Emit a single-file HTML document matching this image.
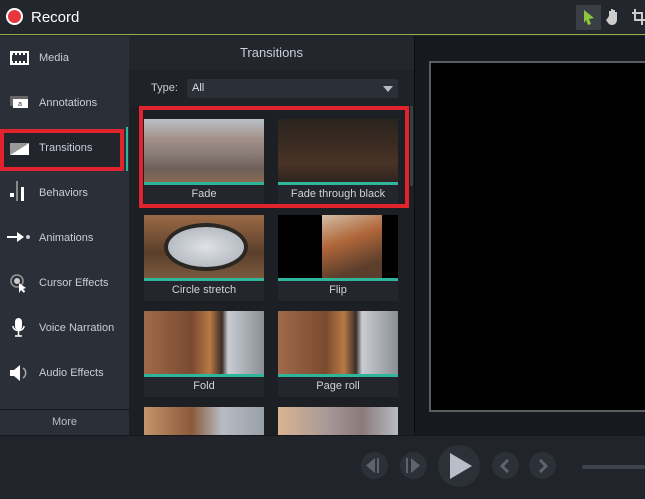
<!DOCTYPE html>
<html><head><style>
*{margin:0;padding:0;box-sizing:border-box}
body{width:645px;height:499px;overflow:hidden;background:#1f2328;font-family:"Liberation Sans",sans-serif;position:relative;color:#c9ced6}
.abs{position:absolute}
.top{left:0;top:0;width:645px;height:35px;background:#23272d;border-bottom:1px solid #8fb04a}
.side{left:0;top:36px;width:129px;height:399px;background:#2b3038}
.item{position:absolute;left:39px;font-size:11px;color:#c9ced6}
.ico{position:absolute;left:10px}
.panel{left:129px;top:36px;width:285px;height:399px;background:#1c1f24}
.thumb{position:absolute;width:120px;height:86px;background:#23272d}
.img{position:absolute;left:0;top:0;width:120px;height:63px}
.teal{position:absolute;left:0;top:63px;width:120px;height:3px;background:#2fb59b}
.lbl{position:absolute;left:0;top:69px;width:120px;text-align:center;font-size:11px;color:#d0d4da}
</style></head><body>
<div class="abs top"></div>
<div class="abs" style="left:6px;top:8px;width:17px;height:17px;border-radius:50%;background:#e8363d;border:2px solid #fff"></div>
<div class="abs" style="left:31px;top:9px;font-size:15px;color:#fff">Record</div>
<div class="abs" style="left:576px;top:5px;width:25px;height:25px;background:#3a3f46"></div>
<svg class="abs" style="left:583px;top:9px" width="12" height="17"><path d="M1 1 L11 9 L6 10 L8 15 L5 16 L3 11 L1 14Z" fill="#8cc63f"/></svg>
<svg class="abs" style="left:606px;top:8px" width="16" height="18"><path d="M3 8 V3 h2 v5 V1 h2 v7 V2 h2 v6 V4 h2 v7 c0 4-2 6-5 6 c-3 0-4-2-6-5 l1-1z" fill="#ccc"/></svg>
<svg class="abs" style="left:632px;top:9px" width="13" height="16"><path d="M3 0 V11 H13 M0 4 H10 V16" stroke="#ccc" stroke-width="2" fill="none"/></svg>
<div class="abs side"></div>
<div class="abs" style="left:0;top:36px;width:129px;height:399px">
 <svg class="ico" style="top:15px" width="19" height="14"><rect x="1" y="1" width="17" height="12" fill="none" stroke="#fff" stroke-width="2"/><path d="M1 3h17M1 11h17" stroke="#fff" stroke-dasharray="2 2" stroke-width="2"/></svg>
 <div class="item" style="top:16px">Media</div>
 <svg class="ico" style="top:60px" width="20" height="14"><rect x="0" y="0" width="18" height="10" fill="#666"/><rect x="3" y="3" width="15" height="9" fill="#fff"/><text x="8" y="10" font-size="7" fill="#333">a</text></svg>
 <div class="item" style="top:61px">Annotations</div>
 <div class="abs" style="left:0;top:93px;width:124px;height:42px;border:4px solid #e0232c;background:#22262c"></div>
 <div class="abs" style="left:126px;top:91px;width:2px;height:44px;background:#2fb59b"></div>
 <svg class="ico" style="top:107px" width="19" height="12"><path d="M0 12 L19 0 V12Z" fill="#fff"/><path d="M0 0 H19 L0 12Z" fill="#999"/></svg>
 <div class="item" style="top:106px">Transitions</div>
 <svg class="ico" style="top:145px" width="16" height="22"><rect x="0" y="12" width="4" height="4" fill="#fff"/><rect x="6" y="0" width="2" height="20" fill="#888"/><rect x="11" y="6" width="3" height="14" fill="#fff"/></svg>
 <div class="item" style="top:151px">Behaviors</div>
 <svg class="ico" style="top:196px;left:7px" width="24" height="10"><path d="M0 5H14" stroke="#fff" stroke-width="2"/><path d="M10 0 L17 5 L10 10Z" fill="#fff"/><circle cx="21" cy="5" r="2" fill="#ccc"/></svg>
 <div class="item" style="top:196px">Animations</div>
 <svg class="ico" style="top:238px" width="18" height="20"><circle cx="7" cy="7" r="6" fill="none" stroke="#999" stroke-width="1.5"/><circle cx="7" cy="7" r="3" fill="#ccc"/><path d="M9 9 L9 19 L11 16 L14 19 L15 17 L13 15 L16 14Z" fill="#fff"/></svg>
 <div class="item" style="top:241px">Cursor Effects</div>
 <svg class="ico" style="top:282px;left:12px" width="14" height="19"><rect x="3" y="0" width="7" height="12" rx="3.5" fill="#fff"/><path d="M1 8 c0 6 11 6 11 0 M6.5 13 v5 M3 18h7" stroke="#fff" stroke-width="1.5" fill="none"/></svg>
 <div class="item" style="top:286px">Voice Narration</div>
 <svg class="ico" style="top:328px" width="20" height="18"><path d="M0 6 h4 l6-5 v16 l-6-5 h-4z" fill="#fff"/><path d="M13 4 a6 6 0 0 1 0 10" stroke="#aaa" stroke-width="1.5" fill="none"/></svg>
 <div class="item" style="top:331px">Audio Effects</div>
 <div class="abs" style="left:0;top:373px;width:129px;height:1px;background:#16191d"></div>
 <div class="abs" style="left:0;top:380px;width:129px;text-align:center;font-size:11px;color:#b8bdc4">More</div>
</div>
<div class="abs panel"></div>
<div class="abs" style="left:129px;top:36px;width:285px;height:34px;background:#23272d"></div>
<div class="abs" style="left:129px;top:45px;width:285px;text-align:center;font-size:13px;color:#c9ced6">Transitions</div>
<div class="abs" style="left:129px;top:70px;width:285px;height:36px;background:#1f2328"></div>
<div class="abs" style="left:151px;top:82px;font-size:11px">Type:</div>
<div class="abs" style="left:187px;top:79px;width:211px;height:19px;background:#2b3038;border-radius:2px"></div>
<div class="abs" style="left:192px;top:82px;font-size:11px;color:#dde">All</div>
<svg class="abs" style="left:383px;top:86px" width="10" height="6"><path d="M0 0H10L5 6Z" fill="#bbb"/></svg>
<div class="abs" style="left:410px;top:106px;width:3px;height:80px;background:#3a3f46"></div>

<div class="thumb" style="left:144px;top:119px"><div class="img" style="background:linear-gradient(180deg,#b9c0c8 0%,#a5928a 30%,#8a7c78 55%,#6d5f57 80%,#8a6a52 100%)"></div><div class="teal"></div><div class="lbl">Fade</div></div>
<div class="thumb" style="left:278px;top:119px"><div class="img" style="background:linear-gradient(180deg,#2a241f 0%,#3a2b21 40%,#4a3326 70%,#2e2520 100%)"></div><div class="teal"></div><div class="lbl">Fade through black</div></div>
<div class="thumb" style="left:144px;top:215px"><div class="img" style="background:linear-gradient(180deg,#9a6a45,#5b3e2b 60%,#7a5a3e)"></div><div class="abs" style="left:20px;top:8px;width:84px;height:48px;border-radius:50%;background:radial-gradient(#dfe2e6,#a7adb5);border:4px solid #2a2622"></div><div class="teal"></div><div class="lbl">Circle stretch</div></div>
<div class="thumb" style="left:278px;top:215px"><div class="img" style="background:#000"></div><div class="abs" style="left:44px;top:0;width:60px;height:63px;background:linear-gradient(160deg,#d3bfa5,#b0663a 40%,#5b3e2b 80%)"></div><div class="teal"></div><div class="lbl">Flip</div></div>
<div class="thumb" style="left:144px;top:311px"><div class="img" style="background:linear-gradient(90deg,#a0694a 0%,#7a4a30 40%,#b87a45 55%,#3a2e28 65%,#c9ccd2 70%,#8a8f96 100%)"></div><div class="teal"></div><div class="lbl">Fold</div></div>
<div class="thumb" style="left:278px;top:311px"><div class="img" style="background:linear-gradient(90deg,#a0694a 0%,#7a4a30 40%,#b87a45 55%,#3a2e28 65%,#c9ccd2 70%,#8a8f96 100%)"></div><div class="teal"></div><div class="lbl">Page roll</div></div>
<div class="thumb" style="left:144px;top:407px;height:28px"><div class="img" style="height:28px;background:linear-gradient(90deg,#c4946a 0%,#8a5a3a 40%,#b7bcc4 65%,#9aa0a8 100%)"></div></div>
<div class="thumb" style="left:278px;top:407px;height:28px"><div class="img" style="height:28px;background:linear-gradient(90deg,#d9b48f 0%,#a89a98 40%,#8a7a7a 70%,#b8bcc2 100%)"></div></div>
<div class="abs" style="left:139px;top:106px;width:270px;height:102px;border:4px solid #e0232c"></div>

<div class="abs" style="left:414px;top:36px;width:231px;height:399px;background:#16191d;border-left:1px solid #0c0d0f"></div>
<div class="abs" style="left:429px;top:61px;width:216px;height:351px;background:#000;border:2px solid #5a5e63;border-right:none"></div>
<div class="abs" style="left:0;top:435px;width:645px;height:64px;background:#21252b;border-top:1px solid #15171a"></div>
<div class="abs" style="left:361px;top:452px;width:27px;height:27px;border-radius:50%;background:#2c3138"></div>
<div class="abs" style="left:400px;top:452px;width:27px;height:27px;border-radius:50%;background:#2c3138"></div>
<div class="abs" style="left:438px;top:445px;width:42px;height:42px;border-radius:50%;background:#2c3138"></div>
<div class="abs" style="left:492px;top:452px;width:27px;height:27px;border-radius:50%;background:#2c3138"></div>
<div class="abs" style="left:529px;top:452px;width:27px;height:27px;border-radius:50%;background:#2c3138"></div>
<svg class="abs" style="left:366px;top:458px" width="18" height="15"><path d="M9 0 L0 7.5 L9 15Z M11 0h2v15h-2z" fill="#5d646d"/></svg>
<svg class="abs" style="left:406px;top:458px" width="18" height="15"><path d="M0 0h2v15h-2z M5 0 L14 7.5 L5 15Z" fill="#5d646d"/></svg>
<svg class="abs" style="left:450px;top:453px" width="22" height="26"><path d="M0 0 L22 13 L0 26Z" fill="#b7bec7"/></svg>
<svg class="abs" style="left:500px;top:459px" width="10" height="14"><path d="M8 1 L2 7 L8 13" stroke="#5d646d" stroke-width="3" fill="none"/></svg>
<svg class="abs" style="left:538px;top:459px" width="10" height="14"><path d="M2 1 L8 7 L2 13" stroke="#5d646d" stroke-width="3" fill="none"/></svg>
<div class="abs" style="left:582px;top:465px;width:63px;height:4px;border-radius:2px;background:#3d454c"></div>
</body></html>
